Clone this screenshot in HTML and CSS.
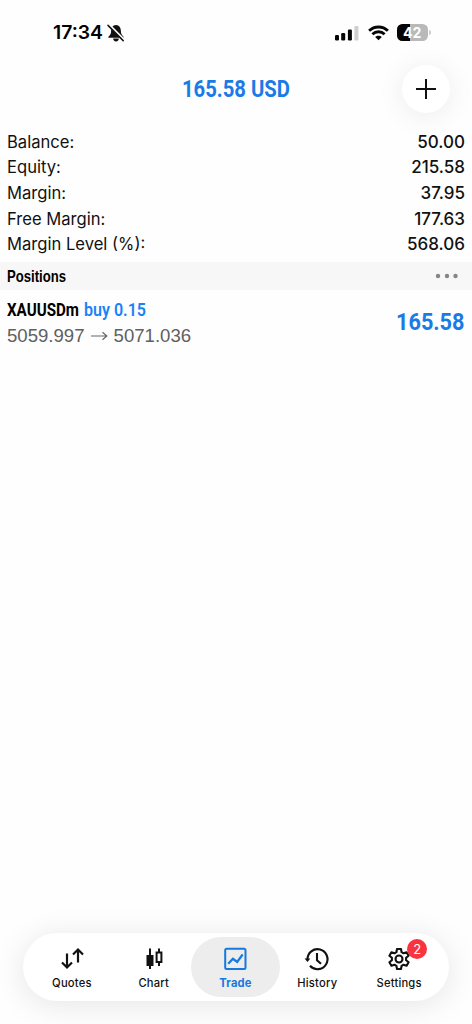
FILE: index.html
```html
<!DOCTYPE html>
<html lang="en">
<head>
<meta charset="utf-8">
<title>Trade</title>
<link rel="stylesheet" href="styles.css">
</head>
<body>
<div class="screen">
  <header class="status">
    <div class="clock">
      <svg class="time" width="51" height="22"><text x="0" y="17" textLength="50" lengthAdjust="spacingAndGlyphs">17:34</text></svg>
      <svg class="bell" width="18" height="18" viewBox="0 0 18 18">
        <path d="M9 1C5.600 1.200 4.200 3.800 4.100 7c0 3-1 4-2.500 5.400-.5.600-.3 1.400.4 1.400h14c.7 0 .9-.8.4-1.400C14.900 11 13.900 10 13.900 7 13.800 3.800 12.400 1.200 9 1z" fill="#111"/>
        <path d="M6.200 14.600h5.600a2.800 2.800 0 0 1-5.600 0z" fill="#111"/>
        <path d="M2 .8L17 15.800" stroke="#fff" stroke-width="2.600"/>
        <path d="M1 1.400L16.200 16.600" stroke="#111" stroke-width="1.500" stroke-linecap="round"/>
      </svg>
    </div>
    <div class="indicators">
      <svg width="25" height="16" viewBox="0 0 25 16" fill="#050505">
        <rect x="0" y="10" width="4" height="5.500" rx="1.200"/><rect x="6.200" y="8" width="4" height="7.500" rx="1.200"/>
        <rect x="12.900" y="4.500" width="4" height="11" rx="1.200"/><rect x="19.400" y="1" width="4" height="14.500" rx="1.200" fill="#cfcfcf"/>
      </svg>
      <svg width="21" height="16" viewBox="0 0 21 16" fill="none" stroke="#050505" stroke-width="2.800">
        <path d="M1.100 5.800C6.300.7 14.700.7 19.900 5.800"/><path d="M4.400 9.300c3.400-3.400 8.800-3.400 12.200 0"/>
        <path d="M7.200 12.100c1.800-1.800 4.800-1.800 6.600 0l-3.300 3.200z" fill="#050505" stroke="none"/>
      </svg>
      <svg class="battery" width="35" height="18" viewBox="0 0 35 18">
        <rect x="0" y="0" width="31" height="17" rx="5.500" fill="#b9b9b9"/>
        <path d="M5.500 0H13v17H5.500A5.500 5.500 0 0 1 0 11.500v-6A5.500 5.500 0 0 1 5.500 0z" fill="#050505"/>
        <path d="M32.300 6c2 .6 2 4.400 0 5z" fill="#b9b9b9"/>
        <text x="6" y="13.900" textLength="18.500" lengthAdjust="spacingAndGlyphs">42</text>
      </svg>
    </div>
  </header>

  <div class="toolbar">
    <svg class="profit" width="112" height="34"><text x="1" y="25" textLength="108" lengthAdjust="spacingAndGlyphs">165.58 USD</text></svg>
    <button class="add" aria-label="New order"><svg width="20" height="20" viewBox="0 0 20 20"><path d="M10 0v20M0 10h20" stroke="#111" stroke-width="2"/></svg></button>
  </div>

  <dl class="account">
    <div class="row"><dt>Balance:</dt><dd>50.00</dd></div>
    <div class="row"><dt>Equity:</dt><dd>215.58</dd></div>
    <div class="row"><dt>Margin:</dt><dd>37.95</dd></div>
    <div class="row"><dt>Free Margin:</dt><dd>177.63</dd></div>
    <div class="row"><dt>Margin Level (%):</dt><dd>568.06</dd></div>
  </dl>

  <div class="section">
    <svg class="section-title" width="64" height="24"><text x="0" y="17.500" textLength="59" lengthAdjust="spacingAndGlyphs">Positions</text></svg>
    <svg width="24" height="6" viewBox="0 0 24 6" fill="#858585"><circle cx="3" cy="3" r="2.200"/><circle cx="12" cy="3" r="2.200"/><circle cx="20.500" cy="3" r="2.200"/></svg>
  </div>

  <div class="position">
    <div class="deal">
      <div class="symbol">
        <svg width="73" height="26"><text x="0" y="19" textLength="72" lengthAdjust="spacingAndGlyphs">XAUUSDm</text></svg>
        <svg class="side" width="64" height="26"><text x="0" y="19" textLength="62" lengthAdjust="spacingAndGlyphs">buy 0.15</text></svg>
      </div>
      <div class="prices"><span>5059.997</span>
        <svg width="17" height="10" viewBox="0 0 17 10" fill="none" stroke="#666" stroke-width="1.200"><path d="M0 5h15.500M11.500 1.200l4.300 3.800-4.300 3.800"/></svg>
        <span>5071.036</span></div>
    </div>
    <svg class="result" width="70" height="34"><text x="1" y="25" textLength="68.500" lengthAdjust="spacingAndGlyphs">165.58</text></svg>
  </div>

  <nav class="tabs">
    <a class="tab">
      <svg width="24" height="24" viewBox="0 0 24 24" fill="none" stroke="#111" stroke-width="2.200"><path d="M7 6.500v14M2 15.500l5 5 5-5M18 15.500V2.500M13 7.500l5-5 5 5"/></svg>
      <span>Quotes</span>
    </a>
    <a class="tab">
      <svg width="24" height="24" viewBox="0 0 24 24" fill="none" stroke="#111" stroke-width="2"><path d="M8 1.500v20.500M17 1.500v4M17 15v4"/><rect x="5.500" y="9" width="5" height="9" fill="#111"/><rect x="14.600" y="5.500" width="4.800" height="9.500"/></svg>
      <span>Chart</span>
    </a>
    <a class="tab active">
      <svg width="24" height="24" viewBox="0 0 24 24" fill="none" stroke="#1779dd" stroke-width="2"><rect x="2.200" y="1.700" width="20.300" height="20.300" rx="1.500"/><path d="M5.200 16.800l4.700-5 4.300 3.200 5.400-7.500" stroke-width="2.200"/></svg>
      <span>Trade</span>
    </a>
    <a class="tab">
      <svg width="24" height="24" viewBox="0 0 24 24" fill="none" stroke="#111" stroke-width="2.100"><path d="M2.500 12.500A10 10 0 1 1 5 18.800"/><path d="M12 6v7.200l4 3.500"/><path d="M-.5 11.500h5.800L2.500 15z" fill="#111" stroke="none"/></svg>
      <span>History</span>
    </a>
    <a class="tab">
      <svg width="24" height="24" viewBox="0 0 24 24" fill="none" stroke="#111" stroke-width="2.100" stroke-linejoin="round"><path d="M10 2h4l.6 3.200 1.900 1.100 3.100-1.100 2 3.500-2.500 2.100v2.400l2.500 2.100-2 3.500-3.100-1.100-1.900 1.100L14 22h-4l-.6-3.200-1.900-1.100-3.100 1.100-2-3.500 2.500-2.100v-2.400L2.400 8.700l2-3.500 3.100 1.100 1.900-1.100z"/><circle cx="12" cy="12" r="3.500"/></svg>
      <span>Settings</span>
      <b class="badge">2</b>
    </a>
  </nav>
</div>
</body>
</html>
```
FILE: styles.css
```css
* { box-sizing: border-box; }
body { margin: 0; background: #fefefe; font-family: Inter, "Liberation Sans", sans-serif; color: #111; }
svg { display: block; flex: none; overflow: visible; }
.screen { width: 472px; height: 1024px; display: flex; flex-direction: column; overflow: hidden; }
.status { height: 64px; padding: 1px 40px 0 53px; display: flex; justify-content: space-between; align-items: center; }
.clock { display: flex; align-items: center; gap: 3px; }
.time { font-size: 19px; font-weight: 600; }
.indicators { display: flex; align-items: center; gap: 8px; }
.battery { font-size: 15px; font-weight: 700; }
.battery text { fill: #fff; }
.toolbar { height: 65px; padding: 0 22px 15px 181px; display: flex; justify-content: space-between; align-items: center; }
.profit, .symbol, .result { font-family: Roboto, "Open Sans", sans-serif; font-weight: 700; }
.profit { font-size: 24px; fill: #1a7be6; }
.add { width: 48px; height: 48px; padding: 0; border: 0; border-radius: 50%; background: #fff; display: grid; place-items: center; box-shadow: 0 3px 28px rgba(0,0,0,.08); }
.account { margin: 0; padding: 0 7px; height: 133px; font-size: 16.600px; }
.row { height: 25.600px; display: flex; justify-content: space-between; align-items: center; }
.row dd { margin: 0; font-weight: 500; font-size: 17px; }
.section { height: 28px; padding: 0 13px 0 7px; background: #f7f7f7; display: flex; justify-content: space-between; align-items: center; }
.section-title { font: 700 16.500px "Liberation Sans", sans-serif; }
.position { height: 64px; padding: 7px 7px 0; display: flex; justify-content: space-between; }
.symbol { display: flex; gap: 4px; font-size: 18.500px; }
.symbol .side { fill: #1a82f7; font-weight: 600; }
.prices { height: 26px; display: flex; align-items: center; gap: 6px; font: 18.600px "Liberation Sans", sans-serif; color: #606060; }
.result { font-size: 24px; fill: #1a7be6; margin-top: 8px; }
.tabs { width: 426px; height: 68px; margin: auto 0 23px 23px; padding: 0 9px 0 8px; border-radius: 34px; background: #fff; box-shadow: 0 4px 32px rgba(0,0,0,.1); display: grid; grid-template-columns: repeat(5, 1fr); }
.tab { position: relative; z-index: 0; display: flex; flex-direction: column; align-items: center; padding-top: 14px; gap: 4px; font-size: 11.200px; line-height: 16px; font-weight: 550; letter-spacing: .2px; }
.active { color: #1779dd; font-weight: 650; }
.active::before { content: ""; position: absolute; z-index: -1; top: 4px; bottom: 4px; left: -4px; right: -4px; border-radius: 30px; background: #ededed; }
.badge { position: absolute; left: 49px; top: 6px; width: 20px; height: 20px; border-radius: 50%; background: #fa343e; color: #fff; font-size: 13px; font-weight: 400; line-height: 20px; text-align: center; letter-spacing: 0; }
```
